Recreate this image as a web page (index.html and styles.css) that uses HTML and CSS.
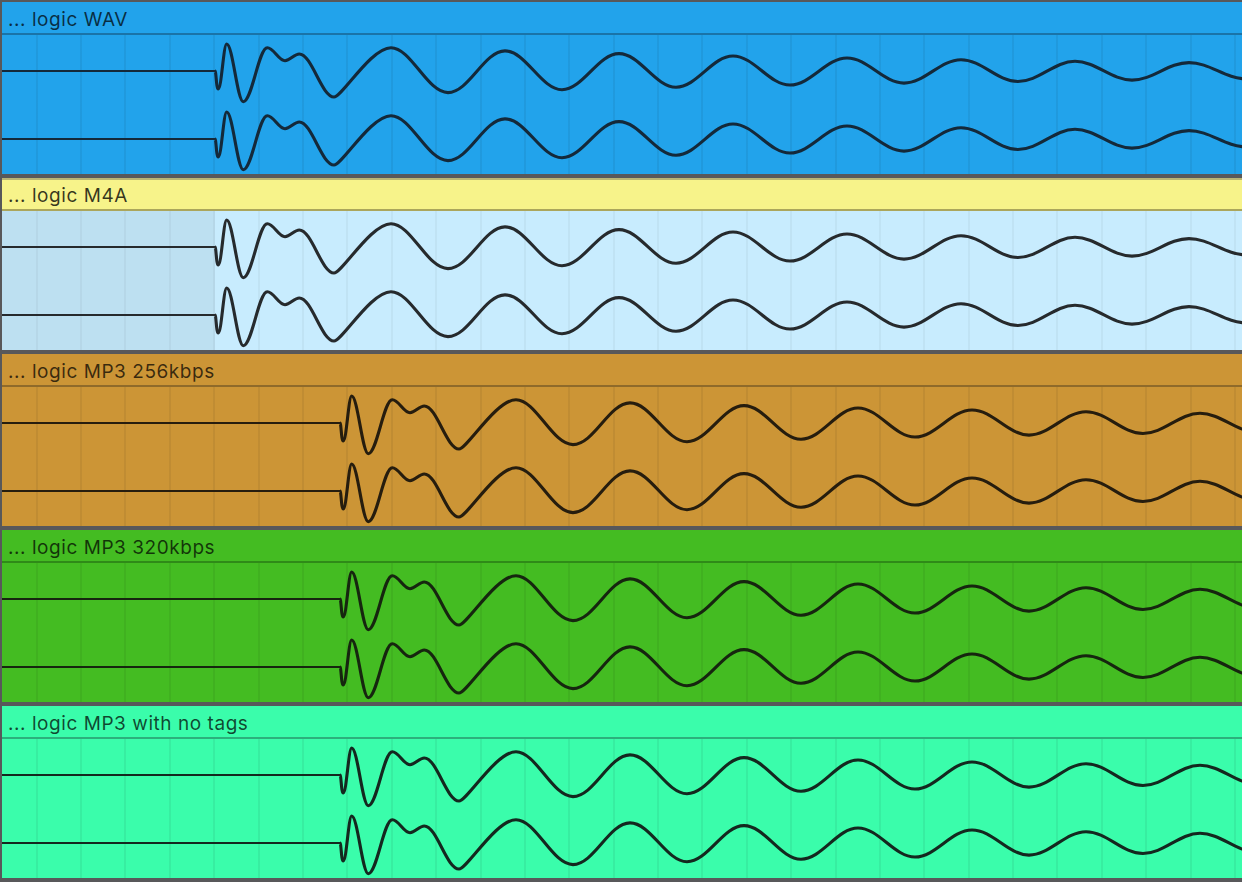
FILE: index.html
```html
<!DOCTYPE html>
<html lang="en">
<head>
    <meta charset="UTF-8">
    <title>Tracks</title>
    <link rel="stylesheet" href="styles.css">
</head>
<body>
    <!-- one channel of the waveform, centred on y = 0 -->
    <svg class="defs" width="0" height="0">
        <defs>
            <g id="chan">
                <path class="flat" d="M -200 0 H 215.5"/>
                <path class="wave-line" d="M 215 0 C 216.2 0 216.2 18 218.3 18
                    C 221.4 18 223.6 -27 226.7 -27
                    C 232.7 -27 237.3 30.7 243.3 30.7
                    C 251.9 30.7 258.7 -23.3 267.3 -23.3
                    C 273.7 -23.3 278.6 -10.3 285 -10.3
                    C 290.1 -10.3 294.2 -17 299.3 -17
                    C 311.8 -17 321.5 26 334 26
                    C 342 26 371 -23.3 391 -23.3
                    S 427.2 21.6 448 21.6
                    S 484.2 -20.1 505 -20.1
                    S 541.2 18.7 562 18.7
                    S 598.2 -17.4 619 -17.4
                    S 655.2 16.2 676 16.2
                    S 712.2 -15 733 -15
                    S 769.2 14 790 14
                    S 826.2 -13 847 -13
                    S 883.2 12.1 904 12.1
                    S 940.2 -11.3 961 -11.3
                    S 997.2 10.5 1018 10.5
                    S 1054.2 -9.7 1075 -9.7
                    S 1111.2 9.1 1132 9.1
                    S 1168.2 -8.4 1189 -8.4
                    S 1225.2 7.8 1246 7.8
                    S 1282.2 -7.3 1303 -7.3"/>
            </g>
        </defs>
    </svg>

    <div class="tracks">
        <section class="track track-wav">
            <div class="track-header">... logic WAV</div>
            <div class="track-body">
                <svg class="wave" viewBox="2 0 1240 139">
                    <use href="#chan" y="36"/>
                    <use href="#chan" y="104"/>
                </svg>
            </div>
        </section>

        <section class="track track-m4a">
            <div class="track-header">... logic M4A</div>
            <div class="track-body">
                <svg class="wave" viewBox="2 0 1240 139">
                    <use href="#chan" y="36"/>
                    <use href="#chan" y="104"/>
                </svg>
            </div>
        </section>

        <section class="track track-256">
            <div class="track-header">... logic MP3 256kbps</div>
            <div class="track-body">
                <svg class="wave" viewBox="2 0 1240 139">
                    <use href="#chan" x="125" y="36"/>
                    <use href="#chan" x="125" y="104"/>
                </svg>
            </div>
        </section>

        <section class="track track-320">
            <div class="track-header">... logic MP3 320kbps</div>
            <div class="track-body">
                <svg class="wave" viewBox="2 0 1240 139">
                    <use href="#chan" x="125" y="36"/>
                    <use href="#chan" x="125" y="104"/>
                </svg>
            </div>
        </section>

        <section class="track track-notags">
            <div class="track-header">... logic MP3 with no tags</div>
            <div class="track-body">
                <svg class="wave" viewBox="2 0 1240 139">
                    <use href="#chan" x="125" y="36"/>
                    <use href="#chan" x="125" y="104"/>
                </svg>
            </div>
        </section>
    </div>
</body>
</html>
```

FILE: styles.css
```css
* {
    margin: 0;
    padding: 0;
    box-sizing: border-box;
}

body {
    background: #58585a;
    font-family: 'Inter', 'Noto Sans', sans-serif;
    overflow: hidden;
}

.defs {
    display: block;
    width: 0;
    height: 0;
}

.tracks {
    display: flex;
    flex-direction: column;
    gap: 4px;
    padding: 2px 0 4px 2px;
}

.track {
    height: 172px;
    display: flex;
    flex-direction: column;
}

.track-header {
    height: 33px;
    padding: 4px 0 0 6px;
    line-height: 27px;
    font-size: 19px;
    letter-spacing: 0.55px;
    color: rgba(0, 0, 0, 0.72);
    border-bottom: 2px solid;
    white-space: nowrap;
}

.track-body {
    height: 139px;
    overflow: hidden;
    /* bar grid */
    background-image: repeating-linear-gradient(90deg,
        rgba(0, 0, 0, 0.06) -10.68px, rgba(0, 0, 0, 0.06) -8.68px,
        transparent -8.68px, transparent 33.7px);
}

.wave {
    display: block;
    width: 1240px;
    height: 139px;
}

.flat {
    fill: none;
    stroke: currentColor;
    stroke-width: 2;
}

.wave-line {
    fill: none;
    stroke: currentColor;
    stroke-width: 3.1;
    stroke-linejoin: round;
}

/* track colours */
.track-wav .track-header {
    background: #22a3eb;
    border-color: #1a74a8;
}

.track-wav .track-body {
    background-color: #22a3eb;
    color: #14293a;
}

.track-m4a .track-header {
    background: #f7f38a;
    border-color: #aba65c;
    box-shadow: inset 0 2px 0 #b9b474;
    color: rgba(0, 0, 0, 0.78);
}

.track-m4a .track-body {
    background-color: #c8ecfe;
    background-image:
        repeating-linear-gradient(90deg,
            rgba(0, 0, 0, 0.04) -10.68px, rgba(0, 0, 0, 0.04) -8.68px,
            transparent -8.68px, transparent 33.7px),
        linear-gradient(90deg, #bde0f1 0, #bde0f1 213px, transparent 213px);
    color: #262a2d;
}

.track-256 .track-header {
    background: #cc9536;
    border-color: #8f6a2a;
}

.track-256 .track-body {
    background-color: #cc9536;
    color: #261d0e;
}

.track-320 .track-header {
    background: #44bc22;
    border-color: #2f8a18;
}

.track-320 .track-body {
    background-color: #44bc22;
    color: #16260f;
}

.track-notags .track-header {
    background: #3afdab;
    border-color: #2cb07c;
}

.track-notags .track-body {
    background-color: #3afdab;
    color: #14281f;
}
```
